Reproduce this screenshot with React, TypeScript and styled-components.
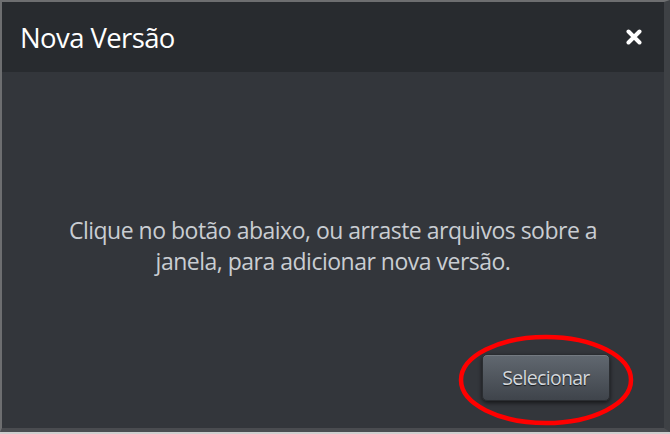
import React from 'react';
import styled, { createGlobalStyle } from 'styled-components';

const GlobalStyle = createGlobalStyle`
  html, body {
    margin: 0;
    padding: 0;
    width: 670px;
    height: 434px;
    overflow: hidden;
    background: #cfcfcf;
  }
  #root {
    width: 670px;
    height: 434px;
  }
`;

const Page = styled.div`
  width: 670px;
  height: 434px;
  display: flex;
  align-items: flex-start;
`;

const Dialog = styled.div`
  position: relative;
  width: 662px;
  height: 426px;
  border-top: 2px solid #6d6e70;
  border-left: 2px solid #6d6e70;
  border-right: 6px solid #3e4145;
  border-bottom: 4px solid #4a4c50;
  display: flex;
  flex-direction: column;
  font-family: 'Open Sans', 'Liberation Sans', sans-serif;
  background: #33363b;
`;

const Header = styled.div`
  height: 70px;
  flex-shrink: 0;
  background: #282b2f;
  display: flex;
  align-items: center;
  justify-content: space-between;
  padding: 0 21px 0 18px;
`;

const Title = styled.h1`
  margin: 0;
  font-size: 27.5px;
  font-weight: 400;
  color: #ffffff;
  letter-spacing: -0.6px;
`;

const Close = styled.button`
  border: 0;
  background: none;
  padding: 0;
  width: 18px;
  height: 18px;
  display: flex;
  align-items: center;
  justify-content: center;
  cursor: pointer;
`;

const Body = styled.div`
  flex: 1;
  display: flex;
  flex-direction: column;
  padding: 143px 30px 27px;
`;

const Message = styled.p`
  margin: 0;
  text-align: center;
  font-size: 23px;
  line-height: 31px;
  color: #c9cdd2;
  letter-spacing: -0.5px;
`;

const Footer = styled.div`
  margin-top: auto;
  padding-right: 24px;
  display: flex;
  justify-content: flex-end;
`;

const Button = styled.button`
  width: 128px;
  height: 47px;
  border-radius: 5px;
  border: 1px solid #2a2d31;
  background: linear-gradient(#616870, #3f444b);
  box-shadow: 0 2px 4px rgba(0, 0, 0, 0.6), inset 0 1px 0 rgba(255, 255, 255, 0.12);
  color: #d3d7dc;
  font-family: 'Open Sans', 'Liberation Sans', sans-serif;
  font-size: 19.5px;
  letter-spacing: -0.7px;
  text-shadow: 0 1px 1px rgba(0, 0, 0, 0.7);
  cursor: pointer;
`;

const Highlight = styled.svg`
  position: absolute;
  left: 454px;
  top: 330px;
  pointer-events: none;
`;

export default function App() {
  return (
    <Page>
      <GlobalStyle />
      <Dialog>
        <Header>
          <Title>Nova Versão</Title>
          <Close aria-label="Fechar">
            <svg width="16" height="16" viewBox="0 0 16 16">
              <path d="M2.5 2.5 L13.5 13.5 M13.5 2.5 L2.5 13.5" stroke="#ffffff" strokeWidth="4" strokeLinecap="round" />
            </svg>
          </Close>
        </Header>
        <Body>
          <Message>
            Clique no botão abaixo, ou arraste arquivos sobre a
            <br />
            janela, para adicionar nova versão.
          </Message>
          <Footer>
            <Button>Selecionar</Button>
          </Footer>
        </Body>
        <Highlight width="180" height="96" viewBox="0 0 180 96">
          <ellipse cx="90" cy="48" rx="85" ry="43" fill="none" stroke="#ff0000" strokeWidth="4.5" />
        </Highlight>
      </Dialog>
    </Page>
  );
}
